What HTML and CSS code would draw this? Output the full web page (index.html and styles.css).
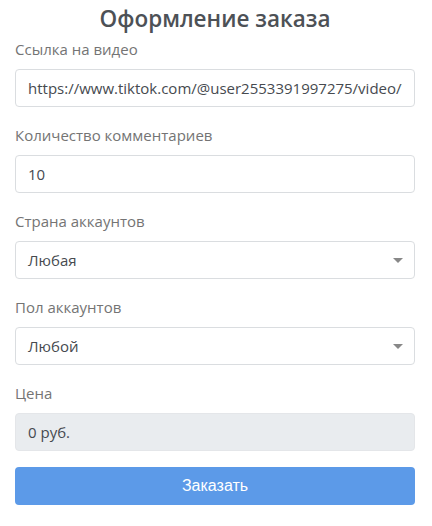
FILE: index.html
```html
<!DOCTYPE html>
<html lang="ru">
<head>
<meta charset="utf-8">
<title>Оформление заказа</title>
<link rel="stylesheet" href="styles.css">
</head>
<body>
<form class="order">
  <h1 class="order-title">Оформление заказа</h1>
  <div class="field">
    <label class="field-label">Ссылка на видео</label>
    <input class="control" type="text" value="https://www.tiktok.com/@user2553391997275/video/7256398127364829">
  </div>
  <div class="field">
    <label class="field-label">Количество комментариев</label>
    <input class="control" type="text" value="10">
  </div>
  <div class="field">
    <label class="field-label">Страна аккаунтов</label>
    <div class="control select"><span>Любая</span><svg class="caret" width="10" height="5" viewBox="0 0 10 5"><path d="M0 0H10L5 5Z" fill="#888"/></svg></div>
  </div>
  <div class="field">
    <label class="field-label">Пол аккаунтов</label>
    <div class="control select"><span>Любой</span><svg class="caret" width="10" height="5" viewBox="0 0 10 5"><path d="M0 0H10L5 5Z" fill="#888"/></svg></div>
  </div>
  <div class="field">
    <label class="field-label">Цена</label>
    <div class="control readonly">0 руб.</div>
  </div>
  <button class="submit" type="button">Заказать</button>
</form>
</body>
</html>
```

FILE: styles.css
```css
* { box-sizing: border-box; }
html, body { margin: 0; padding: 0; background: #fff; }
body {
  font-family: "Open Sans", "Noto Sans", sans-serif;
  font-size: 15px;
  line-height: 1.5;
  color: #495057;
}
.order {
  padding: 4px 15px 0 15px;
  width: 430px;
  display: flex;
  flex-direction: column;
}
.order-title {
  margin: 0 0 4px;
  font-size: 22.5px;
  font-weight: 600;
  line-height: 29px;
  text-align: center;
  color: #4d5156;
}
.field {
  display: flex;
  flex-direction: column;
  margin-bottom: 16px;
}
.field-label {
  display: block;
  line-height: 24px;
  margin-bottom: 8px;
  color: #747474;
}
.control {
  display: flex;
  align-items: center;
  width: 400px;
  height: 38px;
  padding: 0 12px;
  border: 1px solid #dadde0;
  border-radius: 4px;
  background: #fff;
  font: inherit;
  color: #464a4f;
  outline: none;
}
.select { justify-content: space-between; padding-right: 11px; }
.caret { display: block; }
.readonly { background: #e9ecef; border-color: #e4e6e9; }
.submit {
  width: 400px;
  height: 38px;
  border: 0;
  border-radius: 4px;
  background: #5c9ae8;
  color: #fff;
  font-family: "Liberation Sans", Arial, sans-serif;
  font-size: 16px;
}
```
